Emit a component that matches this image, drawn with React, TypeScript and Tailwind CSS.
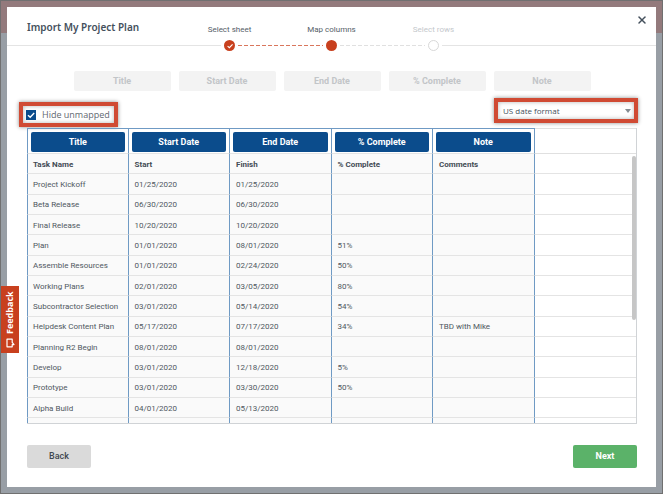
import { X } from 'lucide-react'

const columns = ['Title', 'Start Date', 'End Date', '% Complete', 'Note']

const rows = [
  ['Project Kickoff', '01/25/2020', '01/25/2020', '', ''],
  ['Beta Release', '06/30/2020', '06/30/2020', '', ''],
  ['Final Release', '10/20/2020', '10/20/2020', '', ''],
  ['Plan', '01/01/2020', '08/01/2020', '51%', ''],
  ['Assemble Resources', '01/01/2020', '02/24/2020', '50%', ''],
  ['Working Plans', '02/01/2020', '03/05/2020', '80%', ''],
  ['Subcontractor Selection', '03/01/2020', '05/14/2020', '54%', ''],
  ['Helpdesk Content Plan', '05/17/2020', '07/17/2020', '34%', 'TBD with Mike'],
  ['Planning R2 Begin', '08/01/2020', '08/01/2020', '', ''],
  ['Develop', '03/01/2020', '12/18/2020', '5%', ''],
  ['Prototype', '03/01/2020', '03/30/2020', '50%', ''],
  ['Alpha Build', '04/01/2020', '05/13/2020', '', ''],
  ['\u00a0', '', '', '', ''],
]

function Check({ className }: { className: string }) {
  return (
    <svg viewBox="0 0 10 10" className={className} fill="none" stroke="white" strokeWidth="1.4">
      <path d="M2 5.2 4.2 7.2 8.2 3" />
    </svg>
  )
}

function Header() {
  return (
    <header>
      <div className="grid grid-cols-[1fr_auto_1fr] px-2 pt-1">
        <h1 className="pt-2 pl-3 font-['Noto_Sans'] text-[10px] leading-4 font-semibold whitespace-nowrap text-[#44505c]">
          Import My Project Plan
        </h1>
        <ol className="flex pt-3 text-center text-[8px] leading-[14px] text-[#555e68]">
          <li className="w-[102px]">Select sheet</li>
          <li className="w-[102px]">Map columns</li>
          <li className="w-[102px] text-[#c4c8cc]">Select rows</li>
        </ol>
        <button type="button" aria-label="Close" className="mt-[3px] flex size-3 items-center justify-center justify-self-end">
          <X className="size-3 shrink-0 text-[#44505c]" strokeWidth={3} />
        </button>
      </div>
      <div className="mt-[3px] flex items-center">
        <div className="mr-[3px] h-px flex-1 bg-[#e4e4e4]" />
        <div className="flex size-[11px] items-center justify-center rounded-full bg-[#c8401e]">
          <Check className="size-2" />
        </div>
        <svg className="mx-[3px] h-px w-[85px]">
          <path d="M0 .5h85" stroke="#d9765c" strokeDasharray="4 2" />
        </svg>
        <div className="size-[11px] rounded-full bg-[#c8401e]" />
        <svg className="mx-[3px] h-px w-[85px]">
          <path d="M0 .5h85" stroke="#e0e0e0" strokeDasharray="4 2" />
        </svg>
        <div className="size-[11px] rounded-full border border-[#d8d8d8] bg-white" />
        <div className="ml-[3px] h-px flex-1 bg-[#e4e4e4]" />
      </div>
    </header>
  )
}

function Toolbar() {
  return (
    <div className="-mr-px -ml-2 flex items-start justify-between font-['Open_Sans']">
      <div className="mt-1 flex h-[25px] items-center border-4 border-[#d04a33] pr-1 pl-[3px] shadow-[0_0_4px_rgba(0,0,0,0.45),inset_0_0_4px_rgba(0,0,0,0.3)]">
        <label className="flex items-center gap-[6px] text-[9px] leading-3 text-[#5f6870]">
          <span className="relative flex size-[10px]">
            <input type="checkbox" defaultChecked className="peer size-[10px] appearance-none border border-[#0b4c8c] checked:bg-[#0b4c8c]" />
            <Check className="pointer-events-none absolute inset-0 hidden size-[10px] peer-checked:block" />
          </span>
          Hide unmapped
        </label>
      </div>
      <div className="relative h-[25px] w-36 border-4 border-[#d04a33] shadow-[0_0_4px_rgba(0,0,0,0.45),inset_0_0_4px_rgba(0,0,0,0.3)]">
        <select aria-label="Date format" className="block h-full w-full appearance-none pl-[5px] text-[8px] leading-3 text-[#44505c]">
          <option>US date format</option>
          <option>EU date format</option>
        </select>
        <svg viewBox="0 0 6 4" className="pointer-events-none absolute top-[7px] right-[3px] h-1 w-[6px] fill-[#858c92]">
          <path d="M0 0h6L3 4z" />
        </svg>
      </div>
    </div>
  )
}

function MappingTable() {
  return (
    <div className="relative mt-px min-h-0 flex-1 overflow-hidden border-r border-b border-[#d0d3d6]">
      <table className="h-[311px] w-full table-fixed border-separate border-spacing-0 text-left text-[8px] leading-3 text-[#4f5861]">
        <thead>
          <tr className="h-[26px]">
            {columns.map((column) => (
              <th key={column} className="border-t border-r border-b border-t-[#6f9ac4] border-r-[#6f9ac4] border-b-[#e4e4e4] px-[3px] pt-[2px] first:border-l first:border-l-[#6f9ac4]">
                <div className="rounded-xs bg-[#0b4c8c] text-center text-[9px] leading-5 font-bold text-white">{column}</div>
              </th>
            ))}
            <td className="border-t border-b border-[#e0e0e0]" />
          </tr>
        </thead>
        <tbody>
          <tr className="font-bold text-[#444c55]">
            {['Task Name', 'Start', 'Finish', '% Complete', 'Comments'].map((name) => (
              <td key={name} className="border-r border-b border-r-[#6f9ac4] border-b-[#e4e4e4] bg-[#fafafa] px-[6px] pt-[2px] first:border-l first:border-l-[#6f9ac4] first:pl-[5px]">
                {name}
              </td>
            ))}
            <td className="border-b border-[#e4e4e4]" />
          </tr>
          {rows.map((row, i) => (
            <tr key={i}>
              {row.map((cell, j) => (
                <td key={j} className="border-r border-b border-r-[#6f9ac4] border-b-[#e4e4e4] bg-[#fafafa] px-[6px] pt-[2px] whitespace-nowrap first:border-l first:border-l-[#6f9ac4] first:pl-[5px]">
                  {cell}
                </td>
              ))}
              <td className="border-b border-[#e4e4e4]" />
            </tr>
          ))}
        </tbody>
      </table>
      <div className="absolute top-7 right-0 h-[164px] w-1 rounded-sm bg-[#c6c6c6]" />
    </div>
  )
}

function FeedbackTab() {
  return (
    <button
      type="button"
      className="absolute top-[285px] left-0 flex h-[67px] w-[18px] rotate-180 items-center justify-center gap-1 bg-[#c8401e] font-['Open_Sans'] text-[9px] leading-3 font-bold text-white [writing-mode:vertical-rl]"
    >
      <svg viewBox="0 0 10 10" className="size-[10px] rotate-180" fill="none" stroke="white" strokeWidth="1.2" strokeLinejoin="round">
        <path d="M2 1.2H7.2V4.4L9 6.6H7.2V8.8H2z" />
      </svg>
      Feedback
    </button>
  )
}

export default function App() {
  return (
    <div className="relative h-screen border border-[#707070] bg-[#989ea5] font-[Roboto,sans-serif]">
      <div className="absolute inset-x-0 top-0 h-8 bg-[#937a7c]" />
      <div className="relative h-full p-[6px]">
        <main className="flex h-full flex-col bg-white">
          <Header />
          <div className="flex min-h-0 flex-1 flex-col pt-5 pr-[19px] pb-[19px] pl-5">
            <div className="mb-[7px] flex justify-center gap-2">
              {columns.map((column) => (
                <div key={column} className="w-[97px] rounded-xs bg-[#f3f3f3] text-center text-[9px] leading-5 font-bold text-[#c2c5c8]">
                  {column}
                </div>
              ))}
            </div>
            <Toolbar />
            <MappingTable />
            <div className="mt-[21px] flex justify-between text-[9px]">
              <button type="button" className="h-[23px] w-16 rounded-xs bg-[#dadada] font-medium text-[#3f4750]">
                Back
              </button>
              <button type="button" className="h-[23px] w-16 rounded-xs bg-[#5bb269] font-bold text-white">
                Next
              </button>
            </div>
          </div>
        </main>
      </div>
      <FeedbackTab />
    </div>
  )
}
